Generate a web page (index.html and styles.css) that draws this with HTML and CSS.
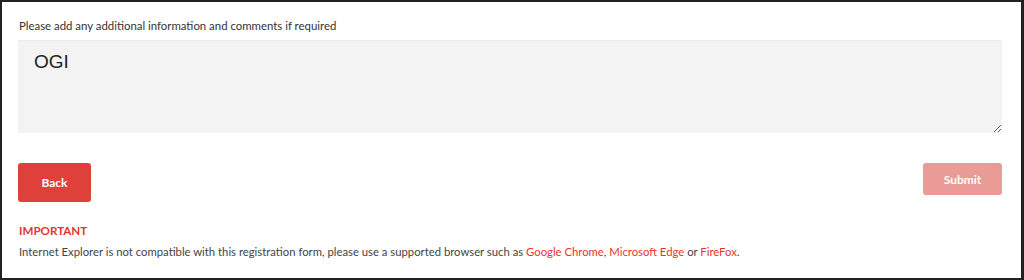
FILE: index.html
```html
<!DOCTYPE html>
<html lang="en">
<head>
  <meta charset="UTF-8">
  <meta name="viewport" content="width=device-width, initial-scale=1.0">
  <title>Registration - Comments</title>
  <link rel="stylesheet" href="styles.css">
</head>
<body>
  <div class="frame">
    <label class="field-label" for="comments">Please add any additional information and comments if required</label>
    <textarea id="comments" class="comments">OGI</textarea>
    <div class="actions">
      <button class="btn btn-back">Back</button>
      <button class="btn btn-submit" disabled>Submit</button>
    </div>
    <p class="notice-title">IMPORTANT</p>
    <p class="notice-text">Internet Explorer is not compatible with this registration form, please use a supported browser such as <a href="#">Google Chrome</a>, <a href="#">Microsoft Edge</a> or <a href="#">FireFox</a>.</p>
  </div>
</body>
</html>
```

FILE: styles.css
```css
html, body {
  margin: 0;
  padding: 0;
  background: #fff;
}
body {
  font-family: Lato, "Open Sans", sans-serif;
  color: #333;
}
.frame {
  box-sizing: border-box;
  width: 1024px;
  height: 280px;
  border: 2px solid #222;
  border-right-width: 3px;
  padding: 16px 19px 0 16px;
  display: flex;
  flex-direction: column;
}
.field-label {
  display: block;
  font-size: 11.4px;
  line-height: 16px;
  padding-left: 1px;
  color: #333;
  margin-bottom: 6px;
}
.comments {
  box-sizing: border-box;
  width: 100%;
  height: 93px;
  border: none;
  border-top: 1px solid #ebebeb;
  background: #f3f3f3;
  padding: 9px 16px;
  font-family: "Liberation Sans", Arial, sans-serif;
  font-size: 19px;
  line-height: 24px;
  color: #222;
  resize: vertical;
  outline: none;
  margin: 0;
}
.actions {
  display: flex;
  justify-content: space-between;
  align-items: flex-start;
  margin-top: 30px;
}
.btn {
  font-family: Lato, "Open Sans", sans-serif;
  font-size: 12px;
  font-weight: bold;
  color: #fff;
  border: none;
  border-radius: 3px;
  cursor: pointer;
}
.btn-back {
  width: 73px;
  height: 39px;
  background: #e0403a;
}
.btn-submit {
  width: 79px;
  height: 32px;
  background: #ea9a97;
  cursor: default;
}
.notice-title {
  margin: 21px 0 0 1px;
  font-size: 11.6px;
  line-height: 16px;
  font-weight: bold;
  color: #e8352c;
}
.notice-text {
  margin: 5px 0 0 1px;
  font-size: 11.3px;
  line-height: 16px;
  color: #444;
}
.notice-text a {
  color: #e8352c;
  text-decoration: none;
}
```
